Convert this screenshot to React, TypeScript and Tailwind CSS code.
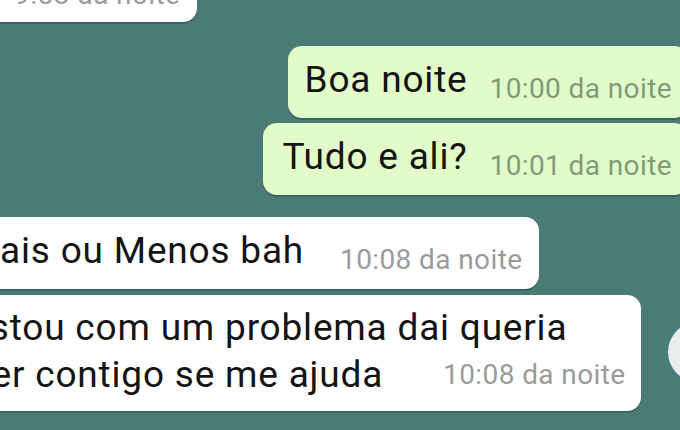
import React from "react";

const font = { fontFamily: "Roboto, 'Noto Sans', sans-serif" };

type BubbleProps = {
  text: string;
  time: string;
  sent?: boolean;
  className?: string;
};

const Bubble = ({ text, time, sent, className }: BubbleProps) => (
  <div
    className={
      "h-[72px] shrink-0 whitespace-nowrap rounded-[14px] shadow-[0_2px_0_#3b635f] flex items-end pb-[15px] pr-[16px] " +
      (sent ? "bg-[#e1fbc9] " : "bg-white ") +
      (className ?? "")
    }
  >
    <span className="mb-[5px] text-[37px] tracking-[0.8px] leading-none text-[#141414]">{text}</span>
    <span
      className={
        "text-[28px] tracking-[0.4px] leading-none " +
        (sent ? "ml-[22px] text-[#819b7a]" : "ml-[36px] text-[#9b9b9b]")
      }
    >
      {time}
    </span>
  </div>
);

export default function App() {
  return (
    <div className="relative w-[680px] h-[430px] overflow-hidden bg-[#4b7b77]" style={font}>
      <div className="flex flex-col">
        {/* earlier message, mostly scrolled off */}
        <div className="-mt-[40px] -ml-[24px] self-start h-[62px] whitespace-nowrap rounded-[14px] bg-white shadow-[0_2px_0_#3b635f] flex items-end pl-[38px] pr-[17px] pb-[13px]">
          <span className="text-[28px] tracking-[0.4px] leading-none text-[#9b9b9b]">9:58 da noite</span>
        </div>

        {/* sent */}
        <div className="mt-[24px] -mr-[8px] flex flex-col items-end gap-[5px]">
          <Bubble sent text="Boa noite" time="10:00 da noite" className="pl-[17px]" />
          <Bubble sent text="Tudo e ali?" time="10:01 da noite" className="pl-[19px]" />
        </div>

        {/* received */}
        <div className="mt-[22px] flex flex-col items-start gap-[6px]">
          <Bubble text="Mais ou Menos bah" time="10:08 da noite" className="-ml-[50px] pl-[17px]" />
          <div className="-ml-[49px] shrink-0 whitespace-nowrap rounded-[14px] bg-white shadow-[0_2px_0_#3b635f] flex flex-col pt-[9px] pb-[13px] pl-[17px] pr-[15px] text-[37px] tracking-[0.8px] leading-[47px] text-[#141414]">
            <div>Estou com um problema dai queria</div>
            <div className="flex items-end">
              <span>Ver contigo se me ajuda</span>
              <span className="ml-[60px] mb-[9px] text-[28px] tracking-[0.4px] leading-none text-[#9b9b9b]">
                10:08 da noite
              </span>
            </div>
          </div>
        </div>
      </div>

      {/* scroll-down button peeking from the edge */}
      <div className="absolute left-[668px] top-[322px] w-[60px] h-[60px] rounded-full bg-[#e9eeed]" />
    </div>
  );
}
